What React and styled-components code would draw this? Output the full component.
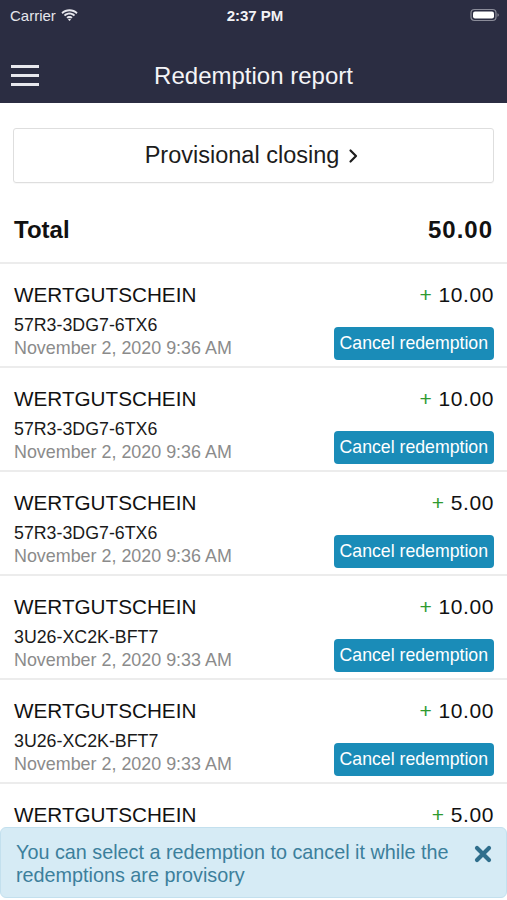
import React from 'react';
import styled, { createGlobalStyle } from 'styled-components';

const GlobalStyle = createGlobalStyle`
  html, body {
    margin: 0;
    padding: 0;
    background: #ffffff;
    font-family: "Liberation Sans", Arial, sans-serif;
  }
`;

const Page = styled.div`
  width: 507px;
  height: 900px;
  position: relative;
  overflow: hidden;
  background: #fff;
`;

const Header = styled.div`
  background: #2b2d42;
  height: 103px;
  color: #fff;
`;

const StatusBar = styled.div`
  height: 30px;
  display: grid;
  grid-template-columns: 1fr auto 1fr;
  align-items: center;
  padding: 0 7px 0 10px;
  font-size: 15px;
`;

const Carrier = styled.div`
  display: flex;
  align-items: center;
  gap: 5px;
  color: #e6e6ec;
`;

const Clock = styled.div`
  font-weight: 700;
  color: #f2f2f5;
`;

const Battery = styled.div`
  justify-self: end;
  display: flex;
  align-items: center;
`;

const NavBar = styled.div`
  height: 73px;
  box-sizing: border-box;
  padding-top: 19px;
  display: flex;
  align-items: center;
  position: relative;
  justify-content: center;
`;

const Burger = styled.div`
  position: absolute;
  left: 11px;
  top: 35px;
  display: flex;
  flex-direction: column;
  gap: 6px;
  span {
    display: block;
    width: 28px;
    height: 3px;
    background: #e8e8ee;
  }
`;

const Title = styled.div`
  font-size: 24px;
  color: #f4f4f7;
`;

const Content = styled.div`
  padding: 25px 13px 0 13px;
`;

const ClosingButton = styled.div`
  height: 53px;
  border: 1px solid #dedede;
  border-radius: 3px;
  display: flex;
  align-items: center;
  justify-content: center;
  gap: 9px;
  padding-right: 4px;
  font-size: 23.5px;
  color: #1c1c1c;
  box-shadow: 0 1px 1px rgba(0, 0, 0, 0.03);
`;

const TotalRow = styled.div`
  display: flex;
  justify-content: space-between;
  align-items: center;
  height: 79px;
  box-sizing: border-box;
  padding: 14px 1px 0 1px;
  font-size: 24px;
  font-weight: 700;
  color: #111;
`;

const TotalValue = styled.span`
  letter-spacing: 1px;
`;

const List = styled.div`
  margin: 0 -13px;
`;

const Row = styled.div`
  border-top: 2px solid #ececec;
  height: 104px;
  box-sizing: border-box;
  padding: 19px 13px 0 14px;
  display: flex;
  justify-content: space-between;
`;

const Left = styled.div`
  display: flex;
  flex-direction: column;
`;

const Name = styled.div`
  font-size: 20.7px;
  line-height: 24px;
  color: #111;
`;

const Code = styled.div`
  font-size: 17.8px;
  line-height: 22px;
  margin-top: 7px;
  color: #1a1a1a;
`;

const DateText = styled.div`
  font-size: 17.9px;
  line-height: 22px;
  margin-top: 1px;
  color: #8b8b8b;
`;

const Right = styled.div`
  display: flex;
  flex-direction: column;
  align-items: flex-end;
`;

const Amount = styled.div`
  font-size: 21px;
  line-height: 24px;
  color: #111;
  letter-spacing: 0.6px;
  span {
    color: #2f9a2f;
    margin-right: 6px;
  }
`;

const CancelButton = styled.div`
  margin-top: 20px;
  height: 33px;
  padding: 0 6px;
  border-radius: 4px;
  background: #1a8cb8;
  color: #fff;
  font-size: 17.7px;
  display: flex;
  align-items: center;
`;

const Toast = styled.div`
  position: absolute;
  left: 0;
  right: 0;
  top: 827px;
  height: 71px;
  box-sizing: border-box;
  background: #d6ebf5;
  border: 1px solid #c3e0ee;
  border-radius: 6px;
  padding: 13px 14px 0 15px;
  display: flex;
  justify-content: space-between;
  align-items: flex-start;
`;

const ToastText = styled.div`
  font-size: 19.8px;
  line-height: 23px;
  color: #3c7f9c;
`;

const Close = styled.div`
  margin-top: 4px;
  display: flex;
`;

const items = [
  { amount: '10.00', code: '57R3-3DG7-6TX6', date: 'November 2, 2020 9:36 AM' },
  { amount: '10.00', code: '57R3-3DG7-6TX6', date: 'November 2, 2020 9:36 AM' },
  { amount: '5.00', code: '57R3-3DG7-6TX6', date: 'November 2, 2020 9:36 AM' },
  { amount: '10.00', code: '3U26-XC2K-BFT7', date: 'November 2, 2020 9:33 AM' },
  { amount: '10.00', code: '3U26-XC2K-BFT7', date: 'November 2, 2020 9:33 AM' },
  { amount: '5.00', code: '3U26-XC2K-BFT7', date: 'November 2, 2020 9:33 AM' },
];

export default function App() {
  return (
    <Page>
      <GlobalStyle />
      <Header>
        <StatusBar>
          <Carrier>
            Carrier
            <svg width="17" height="12" viewBox="0 0 17 12">
              <path d="M8.5 2.2c2.6 0 5 1 6.8 2.7l1.3-1.4C14.4 1.3 11.6 0.2 8.5 0.2S2.6 1.3 0.4 3.5l1.3 1.4C3.5 3.2 5.9 2.2 8.5 2.2z" fill="#e6e6ec" />
              <path d="M8.5 5.6c1.6 0 3.1 0.6 4.3 1.7l1.3-1.4C12.6 4.5 10.6 3.6 8.5 3.6S4.4 4.5 2.9 5.9l1.3 1.4C5.4 6.2 6.9 5.6 8.5 5.6z" fill="#e6e6ec" />
              <path d="M8.5 8.9c0.7 0 1.3 0.3 1.8 0.7l1.3-1.4C10.8 7.5 9.7 7 8.5 7S6.2 7.5 5.4 8.2l1.3 1.4C7.2 9.2 7.8 8.9 8.5 8.9zM8.5 12l1.5-1.6C9.6 10 9.1 9.8 8.5 9.8S7.4 10 7 10.4z" fill="#e6e6ec" />
            </svg>
          </Carrier>
          <Clock>2:37 PM</Clock>
          <Battery>
            <svg width="30" height="14" viewBox="0 0 30 14">
              <rect x="1" y="1.5" width="25" height="11" rx="3.5" fill="none" stroke="#8b8c99" strokeWidth="1.2" />
              <rect x="3" y="3.5" width="21" height="7" rx="2" fill="#ffffff" />
              <path d="M27.5 5.3v3.4c0.8-0.3 1.3-1 1.3-1.7s-0.5-1.4-1.3-1.7z" fill="#8b8c99" />
            </svg>
          </Battery>
        </StatusBar>
        <NavBar>
          <Burger>
            <span />
            <span />
            <span />
          </Burger>
          <Title>Redemption report</Title>
        </NavBar>
      </Header>
      <Content>
        <ClosingButton>
          Provisional closing
          <svg width="10" height="16" viewBox="0 0 10 16">
            <path d="M2.5 2.5l5.5 5.5-5.5 5.5" fill="none" stroke="#1c1c1c" strokeWidth="2.2" strokeLinecap="round" strokeLinejoin="round" />
          </svg>
        </ClosingButton>
        <TotalRow>
          <span>Total</span>
          <TotalValue>50.00</TotalValue>
        </TotalRow>
        <List>
          {items.map((it, i) => (
            <Row key={i}>
              <Left>
                <Name>WERTGUTSCHEIN</Name>
                <Code>{it.code}</Code>
                <DateText>{it.date}</DateText>
              </Left>
              <Right>
                <Amount>
                  <span>+</span>
                  {it.amount}
                </Amount>
                <CancelButton>Cancel redemption</CancelButton>
              </Right>
            </Row>
          ))}
        </List>
      </Content>
      <Toast>
        <ToastText>
          You can select a redemption to cancel it while the
          <br />
          redemptions are provisory
        </ToastText>
        <Close>
          <svg width="18" height="18" viewBox="0 0 18 18">
            <path d="M3 3l12 12M15 3L3 15" stroke="#2f6e8c" strokeWidth="4.2" strokeLinecap="round" />
          </svg>
        </Close>
      </Toast>
    </Page>
  );
}
